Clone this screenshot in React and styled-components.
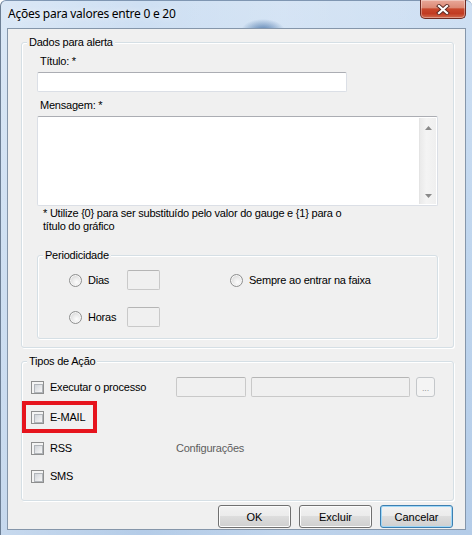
import React from 'react';
import styled, { createGlobalStyle } from 'styled-components';

const Global = createGlobalStyle`
  html, body { margin: 0; padding: 0; }
  body {
    width: 472px; height: 535px; overflow: hidden;
    font-family: "Liberation Sans", Arial, sans-serif;
    font-size: 11px; letter-spacing: -0.22px; color: #000;
  }
  * { box-sizing: border-box; }
`;

const Window = styled.div`
  width: 472px; height: 535px;
  display: flex; flex-direction: column;
  padding: 0 6px 5px 6px;
  border-left: 1px solid #6c7e94;
  border-top: 1px solid #7f96b2;
  border-radius: 6px 6px 0 0;
  background:
    radial-gradient(ellipse 22px 12px at 262px 30px, rgba(40, 90, 150, 0.75), rgba(40, 90, 150, 0) 100%),
    linear-gradient(90deg, rgba(255,255,255,0.25), rgba(255,255,255,0) 30%, rgba(255,255,255,0.15) 60%, rgba(255,255,255,0)),
    linear-gradient(180deg, #cfe0f3 0%, #c0d6ee 45%, #b4cce8 100%);
`;

const TitleBar = styled.div`
  height: 27px; flex: none;
  display: flex; align-items: flex-start; justify-content: space-between;
`;

const Title = styled.div`
  font-family: "Noto Sans", "Open Sans", sans-serif;
  font-size: 12px; line-height: 16px; letter-spacing: -0.25px;
  margin: 5px 0 0 1px;
  color: #000;
  text-shadow: 0 0 6px rgba(255,255,255,0.9);
`;

const CloseButton = styled.div`
  width: 46px; height: 19px; margin-top: -1px;
  display: flex; align-items: center; justify-content: center;
  border: 1px solid #6e2a22; border-top: none;
  border-radius: 0 0 5px 5px;
  background: linear-gradient(180deg, #e9a899 0%, #dc8a76 42%, #c8472c 50%, #c13b22 75%, #d06a4e 100%);
  box-shadow: inset 0 0 0 1px rgba(255,255,255,0.35);
`;

const Client = styled.div`
  flex: 1;
  display: flex; flex-direction: column;
  background: #f0f0f0;
  border: 1px solid #8596aa;
  padding: 13px 11px 0 13px;
`;

const Group = styled.div`
  position: relative;
  height: ${p => p.$h}px;
  margin-top: ${p => p.$mt || 0}px;
  border: 1px solid #d5dfe5;
  border-radius: 3px;
  box-shadow: inset 1px 1px 0 #fff, 1px 1px 0 #fff;
  display: flex; flex-direction: column;
  padding: ${p => p.$pad || '0'};
`;

const Caption = styled.span`
  position: absolute; top: -7px; left: 5px;
  padding: 0 2px;
  line-height: 13px;
  background: #f0f0f0;
`;

const FieldLabel = styled.div`
  line-height: 13px;
  margin: ${p => p.$mt}px 0 4px 3px;
`;

const TextInput = styled.input`
  display: block;
  width: ${p => p.$w}px; height: 20px;
  margin: 0; padding: 0 3px;
  font: inherit;
  background: ${p => (p.disabled ? '#f0f0f0' : '#fff')};
  border: 1px solid ${p => (p.disabled ? '#c9c9c9' : '#dbdfe6')};
  border-top-color: ${p => (p.disabled ? '#b5b5b5' : '#abadb3')};
  border-radius: 2px;
  outline: none;
`;

const TextArea = styled.div`
  width: 401px; height: 90px;
  display: flex;
  background: #fff;
  border: 1px solid #dbdfe6;
  border-top-color: #abadb3;
  border-radius: 2px;
`;

const TextBody = styled.div`
  flex: 1;
`;

const ScrollBar = styled.div`
  width: 17px;
  margin: 1px 1px 1px 0;
  display: flex; flex-direction: column; justify-content: space-between; align-items: center;
  padding: 8px 0 6px;
  background: linear-gradient(90deg, #eaeaea, #f4f4f4 40%, #efefef);
  border-left: 1px solid #e4e4e4;
`;

const Arrow = styled.svg`
  display: block;
`;

const Note = styled.div`
  line-height: 13px;
  margin: 1px 0 0 6px;
  width: 320px;
`;

const PeriodGrid = styled.div`
  display: grid;
  grid-template-columns: 58px 103px 1fr;
  grid-template-rows: 20px 20px;
  row-gap: 17px;
  align-items: center;
  padding: 14px 0 0 31px;
`;

const Option = styled.label`
  display: flex; align-items: center;
  line-height: 13px;
  white-space: nowrap;
`;

const RadioCircle = styled.span`
  width: 13px; height: 13px; flex: none;
  margin-right: 6px;
  border-radius: 50%;
  border: 1px solid #8e8f8f;
  background: radial-gradient(circle at 60% 65%, #fdfdfd 0%, #e9e9e9 45%, #cfcfcf 90%);
  box-shadow: inset 0 0 0 1px #f7f7f7;
`;

const CheckBox = styled.span`
  position: relative;
  width: 13px; height: 13px; flex: none;
  margin-right: 6px;
  border: 1px solid #8e8f8f;
  background: #f4f4f4;
  &::after {
    content: '';
    position: absolute; left: 2px; top: 2px; width: 7px; height: 7px;
    border: 1px solid #b1b5ba;
    background: linear-gradient(135deg, #d1d5da 0%, #e8e9eb 60%, #f7f7f7 100%);
  }
`;

const ActionList = styled.div`
  display: flex; flex-direction: column;
  padding: 15px 0 0 9px;
`;

const ActionRow = styled.div`
  position: relative;
  display: flex; align-items: center;
  height: 20px;
  margin-top: ${p => p.$mt || 0}px;
`;

const OptionCol = styled.div`
  width: 145px; flex: none;
  display: flex; align-items: center;
`;

const Inputs = styled.div`
  display: flex; gap: 5px; align-items: center;
`;

const Ellipsis = styled.div`
  width: 19px; height: 20px;
  margin-left: 1px;
  display: flex; align-items: flex-end; justify-content: center;
  padding-bottom: 3px;
  font-size: 9px; line-height: 9px;
  color: #9a9a9a;
  border: 1px solid #c4c7ca;
  border-radius: 3px;
  background: #f4f4f4;
`;

const MutedText = styled.span`
  color: #5e5e5e;
  line-height: 13px;
`;

const Highlight = styled.div`
  position: absolute;
  left: -9px; top: -6px;
  width: 75px; height: 32px;
  border: 4px solid #e6141d;
  pointer-events: none;
`;

const ButtonRow = styled.div`
  display: flex; justify-content: flex-end; gap: 8px;
  margin: 4px 1px 0 0;
`;

const Button = styled.button`
  width: 73px; height: 23px;
  margin: 0; padding: 0;
  font: inherit; color: #000;
  border: 1px solid ${p => (p.$default ? '#3c7fb1' : '#707070')};
  border-radius: 3px;
  background: linear-gradient(180deg, #f2f2f2 0%, #ebebeb 49%, #dddddd 50%, #cfcfcf 100%);
  box-shadow: inset 0 0 0 1px ${p => (p.$default ? '#9fd7f7' : '#fcfcfc')};
`;

const CloseIcon = () => (
  <svg width="14" height="11" viewBox="0 0 14 11">
    <path d="M3 2 L11 9 M11 2 L3 9" stroke="#5a2a24" strokeWidth="4" strokeLinecap="square" />
    <path d="M3 2 L11 9 M11 2 L3 9" stroke="#fff" strokeWidth="2.2" strokeLinecap="square" />
  </svg>
);

export default function App() {
  return (
    <>
      <Global />
      <Window>
        <TitleBar>
          <Title>Ações para valores entre 0 e 20</Title>
          <CloseButton><CloseIcon /></CloseButton>
        </TitleBar>
        <Client>
          <Group $h={306} $pad="0 0 0 15px">
            <Caption>Dados para alerta</Caption>
            <FieldLabel $mt={12}>Título: *</FieldLabel>
            <TextInput $w={310} />
            <FieldLabel $mt={7}>Mensagem: *</FieldLabel>
            <TextArea>
              <TextBody />
              <ScrollBar>
                <Arrow width="7" height="4" viewBox="0 0 7 4"><path d="M0 4 L3.5 0 L7 4 Z" fill="#8a8a8a" /></Arrow>
                <Arrow width="7" height="4" viewBox="0 0 7 4"><path d="M0 0 L3.5 4 L7 0 Z" fill="#8a8a8a" /></Arrow>
              </ScrollBar>
            </TextArea>
            <Note>* Utilize &#123;0&#125; para ser substituído pelo valor do gauge e &#123;1&#125; para o título do gráfico</Note>
            <Group $h={84} $mt={22} style={{ width: 401 }}>
              <Caption>Periodicidade</Caption>
              <PeriodGrid>
                <Option><RadioCircle />Dias</Option>
                <TextInput $w={33} disabled />
                <Option><RadioCircle />Sempre ao entrar na faixa</Option>
                <Option><RadioCircle />Horas</Option>
                <TextInput $w={33} disabled />
              </PeriodGrid>
            </Group>
          </Group>
          <Group $h={140} $mt={13}>
            <Caption>Tipos de Ação</Caption>
            <ActionList>
              <ActionRow>
                <OptionCol><CheckBox />Executar o processo</OptionCol>
                <Inputs>
                  <TextInput $w={70} disabled />
                  <TextInput $w={159} disabled />
                  <Ellipsis>...</Ellipsis>
                </Inputs>
              </ActionRow>
              <ActionRow $mt={10}>
                <OptionCol><CheckBox />E-MAIL</OptionCol>
                <Highlight />
              </ActionRow>
              <ActionRow $mt={11}>
                <OptionCol><CheckBox />RSS</OptionCol>
                <MutedText>Configurações</MutedText>
              </ActionRow>
              <ActionRow $mt={8}>
                <OptionCol><CheckBox />SMS</OptionCol>
              </ActionRow>
            </ActionList>
          </Group>
          <ButtonRow>
            <Button>OK</Button>
            <Button>Excluir</Button>
            <Button $default>Cancelar</Button>
          </ButtonRow>
        </Client>
      </Window>
    </>
  );
}
